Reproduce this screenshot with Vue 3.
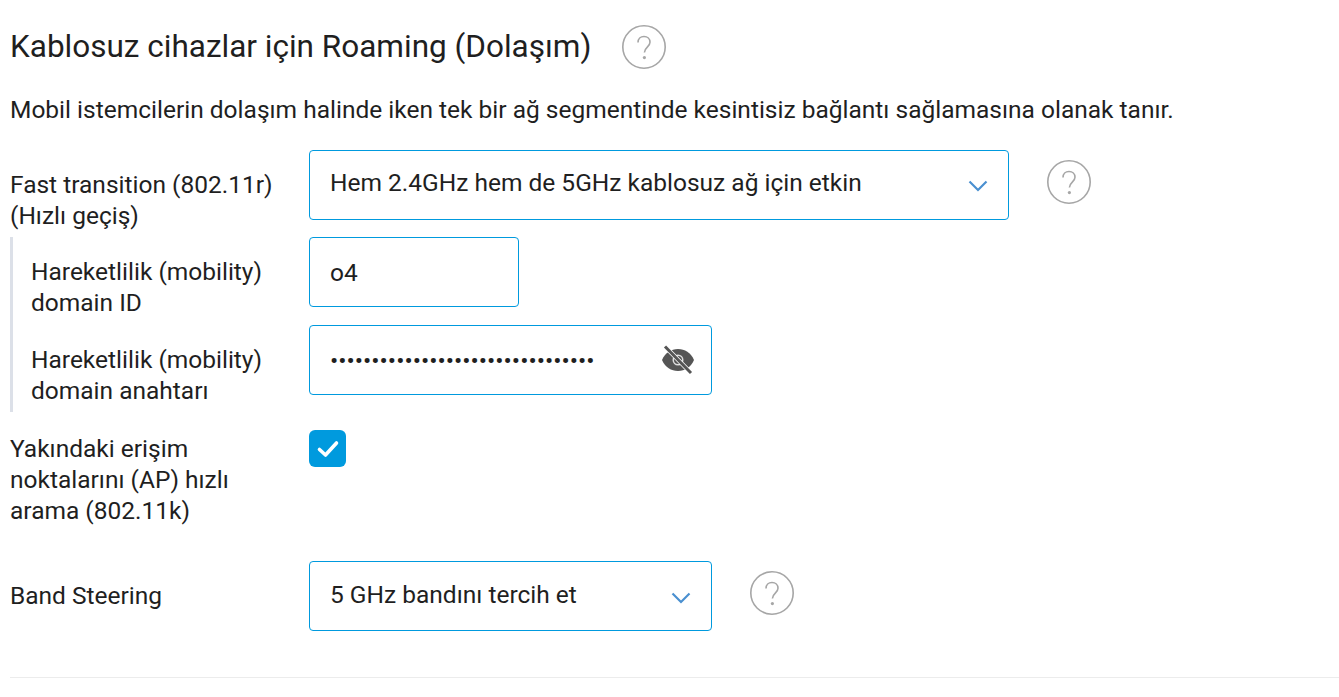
<template>
  <div class="page">
    <div class="title-row">
      <h2 class="title">Kablosuz cihazlar için Roaming (Dolaşım)</h2>
      <span class="help help-title">
        <svg viewBox="0 0 44 44" width="44" height="44"><circle cx="22" cy="22" r="21.2" fill="none" stroke="#a6a6a6" stroke-width="1.6"/><path d="M16 17.5c0-3.6 2.6-6 6-6s6 2.4 6 5.700c0 4.800-5.600 5-5.600 10.300" fill="none" stroke="#a6a6a6" stroke-width="1.6"/><circle cx="22.4" cy="32.6" r="1.6" fill="#a6a6a6"/></svg>
      </span>
    </div>
    <p class="desc">Mobil istemcilerin dolaşım halinde iken tek bir ağ segmentinde kesintisiz bağlantı sağlamasına olanak tanır.</p>

    <div class="row first-row">
      <label class="lbl">Fast transition (802.11r) (Hızlı geçiş)</label>
      <div class="field select wide">
        <span>Hem 2.4GHz hem de 5GHz kablosuz ağ için etkin</span>
        <svg class="chev" viewBox="0 0 20 12" width="20" height="12"><path d="M1.500 1.500 10 10l8.500-8.500" fill="none" stroke="#4a90d0" stroke-width="2.200"/></svg>
      </div>
      <span class="help">
        <svg viewBox="0 0 44 44" width="44" height="44"><circle cx="22" cy="22" r="21.2" fill="none" stroke="#a6a6a6" stroke-width="1.6"/><path d="M16 17.5c0-3.6 2.6-6 6-6s6 2.4 6 5.700c0 4.800-5.600 5-5.600 10.300" fill="none" stroke="#a6a6a6" stroke-width="1.6"/><circle cx="22.4" cy="32.6" r="1.6" fill="#a6a6a6"/></svg>
      </span>
    </div>

    <div class="sub">
      <div class="row sub-row">
        <label class="lbl">Hareketlilik (mobility) domain ID</label>
        <div class="field short"><span>o4</span></div>
      </div>
      <div class="row sub-row">
        <label class="lbl">Hareketlilik (mobility) domain anahtarı</label>
        <div class="field medium">
          <span class="dots">{{ dots }}</span>
          <svg class="eye" viewBox="0 0 34 30" width="34" height="30">
            <path d="M1 15C4.500 7.500 10 4 17 4s12.500 3.500 16 11c-3.500 7.500-9 11-16 11S4.500 22.500 1 15z" fill="#555"/>
            <circle cx="17" cy="15" r="5.500" fill="#ddd"/>
            <circle cx="17" cy="15" r="4" fill="#555"/>
            <path d="M4 1.500 30 28" stroke="#fff" stroke-width="4.500"/>
            <path d="M4 1.500 30 28" stroke="#555" stroke-width="3"/>
          </svg>
        </div>
      </div>
    </div>

    <div class="row check-row">
      <label class="lbl">Yakındaki erişim noktalarını (AP) hızlı arama (802.11k)</label>
      <span class="checkbox">
        <svg viewBox="0 0 24 20" width="24" height="20"><path d="M3.500 10.500 9.500 16 20.500 4" fill="none" stroke="#fff" stroke-width="3.600" stroke-linecap="round" stroke-linejoin="round"/></svg>
      </span>
    </div>

    <div class="row band-row">
      <label class="lbl">Band Steering</label>
      <div class="field select medium band-select">
        <span>5 GHz bandını tercih et</span>
        <svg class="chev" viewBox="0 0 20 12" width="20" height="12"><path d="M1.500 1.500 10 10l8.500-8.500" fill="none" stroke="#4a90d0" stroke-width="2.200"/></svg>
      </div>
      <span class="help">
        <svg viewBox="0 0 44 44" width="44" height="44"><circle cx="22" cy="22" r="21.2" fill="none" stroke="#a6a6a6" stroke-width="1.6"/><path d="M16 17.5c0-3.6 2.6-6 6-6s6 2.4 6 5.700c0 4.800-5.600 5-5.600 10.300" fill="none" stroke="#a6a6a6" stroke-width="1.6"/><circle cx="22.4" cy="32.6" r="1.6" fill="#a6a6a6"/></svg>
      </span>
    </div>

    <div class="divider"></div>
  </div>
</template>

<script setup>
const dots = '•'.repeat(32)
</script>

<style>
html, body {
  margin: 0;
  background: #fff;
}
</style>

<style scoped>
.page {
  padding: 25px 0 0 10px;
  font-family: Roboto, "Noto Sans", sans-serif;
  color: #1f1f1f;
  font-size: 24.5px;
  height: 672px;
  overflow: hidden;
}

.title-row {
  display: flex;
  align-items: center;
  height: 44px;
}

.title {
  margin: 0;
  font-size: 31.5px;
  font-weight: 400;
  line-height: 44px;
}

.help-title {
  margin-left: 31px;
}

.help {
  display: flex;
  flex: none;
}

.desc {
  margin: 24px 0 23px;
  line-height: 34px;
}

.row {
  display: flex;
  align-items: flex-start;
}

.first-row {
  margin-bottom: 6px;
}

.lbl {
  width: 299px;
  flex: none;
  line-height: 31px;
  padding: 19px 20px 0 0;
  box-sizing: border-box;
}

.field {
  display: flex;
  align-items: center;
  justify-content: space-between;
  height: 70px;
  box-sizing: border-box;
  border: 1px solid #009ade;
  border-radius: 4px;
  padding: 0 20px;
  background: #fff;
}

.select {
  padding-bottom: 6px;
}

.band-select {
  padding-bottom: 4px;
}

.wide {
  width: 700px;
}

.short {
  width: 210px;
}

.medium {
  width: 403px;
}

.row .help {
  margin: 10px 0 0 38px;
}

.sub {
  border-left: 3px solid #dce0e8;
  padding-left: 18px;
  height: 175px;
  margin-bottom: 18px;
}

.sub-row {
  margin-bottom: 7px;
}

.sub-row .lbl {
  width: 278px;
  padding-right: 0;
}

.chev {
  margin-top: 8px;
}

.eye {
  margin: 0 -4px 0 0;
}

.check-row {
  margin-bottom: 22px;
  min-height: 109px;
}

.check-row .lbl {
  padding-top: 3px;
}

.checkbox {
  display: flex;
  align-items: center;
  justify-content: center;
  width: 37px;
  height: 37px;
  background: #009ade;
  border-radius: 6px;
}

.band-row {
  margin-bottom: 46px;
}

.divider {
  height: 1px;
  background: #ececec;
}
</style>
